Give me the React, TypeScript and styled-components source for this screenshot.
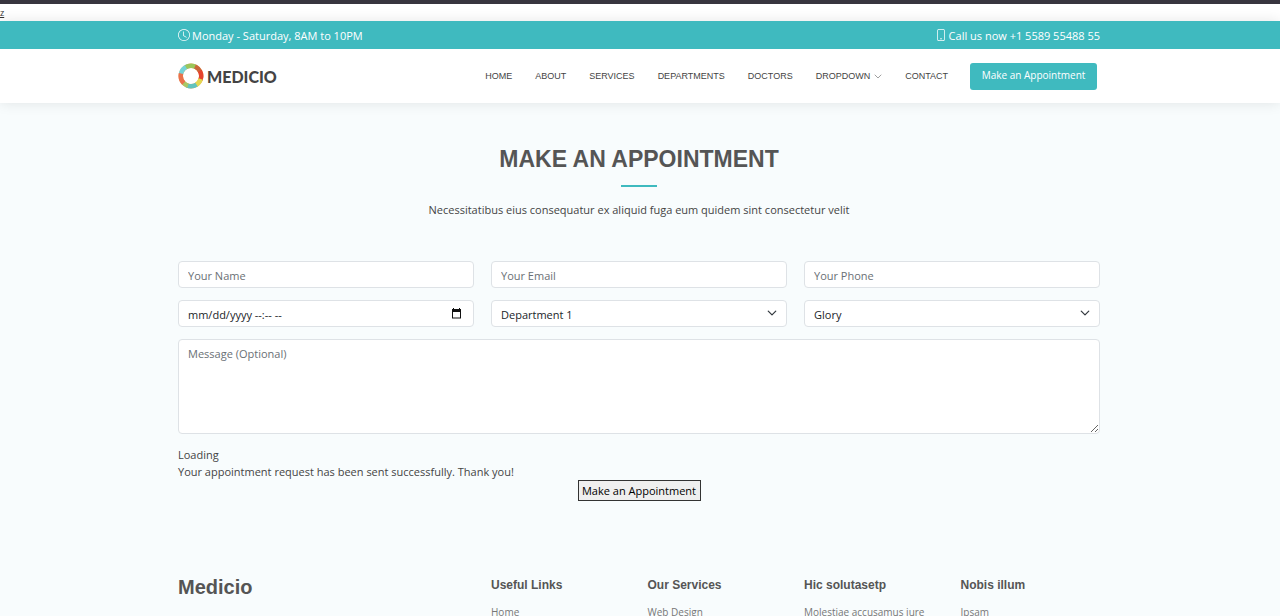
import React, { useState } from "react";
import styled, { createGlobalStyle } from "styled-components";

const teal = "#3fbabf";
const body = `"Open Sans", "Noto Sans", sans-serif`;
const heading = `"Liberation Sans", Arial, sans-serif`;

const GlobalStyle = createGlobalStyle`
  *, *::before, *::after { box-sizing: border-box; }
  html, body { margin: 0; padding: 0; }
  html { scrollbar-width: none; }
  body {
    font-family: ${body};
    font-size: 11px;
    line-height: 17px;
    color: #444;
    background: #f8fcfd;
  }
  h1, h2, h3, p, ul { margin: 0; padding: 0; }
  ul { list-style: none; }
  a { color: inherit; text-decoration: none; }
`;

const Container = styled.div`
  width: 100%;
  max-width: 940px;
  margin: 0 auto;
  padding: 0 10px 0 8px;
`;

const BrowserEdge = styled.div`
  height: 4px;
  background: #38353f;
`;

const Strip = styled.div`
  height: 17px;
  background: #fff;
`;

const SkipLink = styled.a`
  display: block;
  font-size: 9px;
  line-height: 17px;
  color: #333;
  text-decoration: underline;
`;

const Header = styled.header`
  position: relative;
  background: #fff;
  box-shadow: 0 0 13px rgba(0, 0, 0, 0.1);
`;

const TopBar = styled.div`
  background: ${teal};
  color: #fff;
`;

const TopBarRow = styled(Container)`
  display: flex;
  justify-content: space-between;
  align-items: center;
  height: 28px;
`;

const TopBarItem = styled.div`
  display: flex;
  align-items: center;
  gap: 2px;
`;

const NavRow = styled(Container)`
  display: flex;
  justify-content: space-between;
  align-items: center;
  height: 54px;
`;

const Logo = styled.a`
  display: flex;
  align-items: center;
  gap: 3px;
  font-family: Lato, sans-serif;
  font-size: 16px;
  font-weight: 900;
  color: #444;
`;

const Nav = styled.nav`
  display: flex;
  align-items: center;
  gap: 22px;
  padding-right: 3px;
`;

const NavList = styled.ul`
  display: flex;
  gap: 23px;
  font-family: ${heading};
  font-size: 9px;
`;

const NavLink = styled.a`
  display: flex;
  align-items: center;
  gap: 4px;
  text-transform: uppercase;
`;

const CtaLink = styled.a`
  width: 127px;
  height: 27px;
  border-radius: 3px;
  background: ${teal};
  color: #fff;
  font-size: 10px;
  line-height: 25px;
  text-align: center;
`;

const Section = styled.section`
  padding: 42px 0 74px;
`;

const SectionTitle = styled.div`
  display: flex;
  flex-direction: column;
  align-items: center;
  padding-bottom: 43px;
  text-align: center;
`;

const Title = styled.h2`
  font-family: ${heading};
  font-size: 23px;
  line-height: 28px;
  color: #555;
  text-transform: uppercase;
`;

const Rule = styled.span`
  width: 36px;
  height: 2px;
  margin: 12px 0 14px;
  background: ${teal};
`;

const Form = styled.form`
  display: grid;
  grid-template-columns: repeat(3, 1fr);
  gap: 12px 17px;
`;

const fieldStyles = `
  display: block;
  width: 100%;
  height: 27px;
  margin: 0;
  padding: 1px 9px 0;
  border: 1px solid #dee2e6;
  border-radius: 4px;
  outline: none;
  background-color: #fff;
  color: #212529;
  font-family: ${body};
  font-size: 11px;
  &::placeholder { color: #6a7075; opacity: 1; }
`;

const Input = styled.input`
  ${fieldStyles}
`;

const DateInput = styled(Input)`
  &::placeholder { color: #212529; }
  &::-webkit-calendar-picker-indicator { opacity: 0; }
`;

const FieldWrap = styled.div`
  position: relative;
`;

const Select = styled.select`
  ${fieldStyles}
  appearance: none;
`;

const FieldIcon = styled.svg<{ $right: number }>`
  position: absolute;
  right: ${({ $right }) => $right}px;
  top: 8px;
  pointer-events: none;
`;

const Message = styled.textarea`
  ${fieldStyles}
  grid-column: 1 / -1;
  height: 95px;
  padding: 5px 9px;
  line-height: 17px;
  resize: vertical;
`;

const FormFooter = styled.div`
  grid-column: 1 / -1;
  display: flex;
  flex-direction: column;
`;

const Submit = styled.button`
  align-self: center;
  width: 123px;
  height: 21px;
  padding: 0;
  border: 1px solid #333;
  background: #efefef;
  color: #000;
  font-family: ${body};
  font-size: 11px;
  line-height: 17px;
`;

const FooterGrid = styled(Container)`
  display: grid;
  grid-template-columns: 296px repeat(4, 1fr);
  column-gap: 17px;
`;

const FooterBrand = styled.a`
  font-family: ${heading};
  font-size: 20px;
  font-weight: 700;
  line-height: 24px;
  color: #555;
`;

const FooterTitle = styled.h3`
  margin-bottom: 8px;
  font-family: ${heading};
  font-size: 12px;
  line-height: 20px;
  color: #555;
`;

const FooterLink = styled.a`
  font-size: 10px;
  color: #777;
  white-space: nowrap;
`;

const ClockIcon = () => (
  <svg width="12" height="12" viewBox="0 0 16 16" fill="currentColor" aria-hidden="true">
    <path d="M8 3.5a.5.5 0 0 0-1 0V9a.5.5 0 0 0 .252.434l3.5 2a.5.5 0 0 0 .496-.868L8 8.71z" />
    <path d="M8 16A8 8 0 1 0 8 0a8 8 0 0 0 0 16m7-8A7 7 0 1 1 1 8a7 7 0 0 1 14 0" />
  </svg>
);

const PhoneIcon = () => (
  <svg width="12" height="12" viewBox="0 0 16 16" fill="currentColor" aria-hidden="true">
    <path d="M11 1a1 1 0 0 1 1 1v12a1 1 0 0 1-1 1H5a1 1 0 0 1-1-1V2a1 1 0 0 1 1-1zM5 0a2 2 0 0 0-2 2v12a2 2 0 0 0 2 2h6a2 2 0 0 0 2-2V2a2 2 0 0 0-2-2z" />
    <path d="M8 14a1 1 0 1 0 0-2 1 1 0 0 0 0 2" />
  </svg>
);

const ChevronIcon = () => (
  <svg width="8" height="8" viewBox="0 0 16 16" fill="none" stroke="#888" strokeWidth="1.6" strokeLinecap="round" strokeLinejoin="round" aria-hidden="true">
    <path d="M2 6l6 6 6-6" />
  </svg>
);

const LogoMark = () => (
  <svg width="26" height="26" viewBox="0 0 26 26" fill="none" strokeWidth="4.4" aria-hidden="true">
    <circle cx="13" cy="13" r="10.2" stroke="#f0a35c" />
    <path d="M2.9 11A10.2 10.2 0 0 1 9.5 3.4" stroke="#74d3d8" />
    <path d="M8 4.1A10.2 10.2 0 0 1 18.5 4.4" stroke="#9bc65a" />
    <path d="M17 3.6A10.2 10.2 0 0 1 22.3 8.8" stroke="#c9653a" />
    <path d="M21.8 7.900A10.2 10.2 0 0 1 22.4 17" stroke="#e5432d" />
    <path d="M22.7 16A10.2 10.2 0 0 1 17.5 22.200" stroke="#e3d850" />
    <path d="M18.500 21.6A10.2 10.2 0 0 1 8.500 22.200" stroke="#62c3bd" />
    <path d="M10 22.7A10.2 10.2 0 0 1 5 19.4" stroke="#a9c866" />
    <path d="M5.800 20.2A10.2 10.2 0 0 1 3 10.500" stroke="#e9714b" />
  </svg>
);

const Dropdown = ({ label, options }: { label: string; options: string[] }) => (
  <FieldWrap>
    <Select aria-label={label}>
      {options.map((option) => (
        <option key={option}>{option}</option>
      ))}
    </Select>
    <FieldIcon $right={10} width="10" height="10" viewBox="0 0 16 16" fill="none" stroke="#343a40" strokeWidth="2" strokeLinecap="round" strokeLinejoin="round" aria-hidden="true">
      <path d="M2 5l6 6 6-6" />
    </FieldIcon>
  </FieldWrap>
);

const DateField = () => {
  const [active, setActive] = useState(false);
  return (
    <FieldWrap>
      <DateInput
        type={active ? "datetime-local" : "text"}
        placeholder="mm/dd/yyyy --:-- --"
        aria-label="Appointment date"
        onFocus={() => setActive(true)}
        onBlur={(event) => setActive(event.target.value !== "")}
      />
      <FieldIcon $right={12} width="11" height="11" viewBox="0 0 11 11" fill="#111" aria-hidden="true">
        <path d="M2 0h1v1h5V0h1v1h1v9.500H1V1h1zM2 4v5.500h7V4z" fillRule="evenodd" />
      </FieldIcon>
    </FieldWrap>
  );
};

const navItems = ["Home", "About", "Services", "Departments", "Doctors", "Dropdown", "Contact"];

const footerColumns = [
  { title: "Useful Links", link: "Home" },
  { title: "Our Services", link: "Web Design" },
  { title: "Hic solutasetp", link: "Molestiae accusamus iure" },
  { title: "Nobis illum", link: "Ipsam" },
];

export default function App() {
  return (
    <>
      <GlobalStyle />
      <BrowserEdge />
      <Strip>
        <SkipLink href="#appointment">z</SkipLink>
      </Strip>
      <Header>
        <TopBar>
          <TopBarRow>
            <TopBarItem>
              <ClockIcon />
              Monday - Saturday, 8AM to 10PM
            </TopBarItem>
            <TopBarItem>
              <PhoneIcon />
              Call us now +1 5589 55488 55
            </TopBarItem>
          </TopBarRow>
        </TopBar>
        <NavRow>
          <Logo href="#home">
            <LogoMark />
            MEDICIO
          </Logo>
          <Nav>
            <NavList>
              {navItems.map((item) => (
                <li key={item}>
                  <NavLink href={`#${item.toLowerCase()}`}>
                    {item}
                    {item === "Dropdown" && <ChevronIcon />}
                  </NavLink>
                </li>
              ))}
            </NavList>
            <CtaLink href="#appointment">Make an Appointment</CtaLink>
          </Nav>
        </NavRow>
      </Header>
      <main>
        <Section id="appointment">
          <Container>
            <SectionTitle>
              <Title>Make an Appointment</Title>
              <Rule />
              <p>Necessitatibus eius consequatur ex aliquid fuga eum quidem sint consectetur velit</p>
            </SectionTitle>
            <Form onSubmit={(event) => event.preventDefault()}>
              <Input type="text" placeholder="Your Name" aria-label="Your Name" />
              <Input type="email" placeholder="Your Email" aria-label="Your Email" />
              <Input type="tel" placeholder="Your Phone" aria-label="Your Phone" />
              <DateField />
              <Dropdown label="Department" options={["Department 1", "Department 2", "Department 3"]} />
              <Dropdown label="Doctor" options={["Glory"]} />
              <Message placeholder="Message (Optional)" aria-label="Message" />
              <FormFooter>
                <p>Loading</p>
                <p>Your appointment request has been sent successfully. Thank you!</p>
                <Submit type="submit">Make an Appointment</Submit>
              </FormFooter>
            </Form>
          </Container>
        </Section>
      </main>
      <footer>
        <FooterGrid>
          <FooterBrand href="#home">Medicio</FooterBrand>
          {footerColumns.map(({ title, link }) => (
            <div key={title}>
              <FooterTitle>{title}</FooterTitle>
              <FooterLink href="#footer">{link}</FooterLink>
            </div>
          ))}
        </FooterGrid>
      </footer>
    </>
  );
}
